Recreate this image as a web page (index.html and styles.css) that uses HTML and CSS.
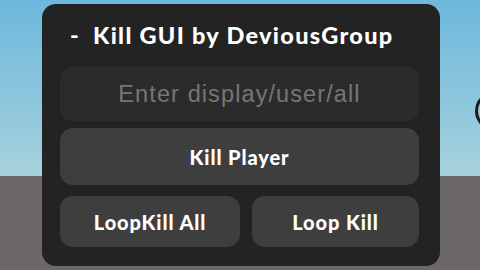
FILE: index.html
```html
<!DOCTYPE html>
<html lang="en">
<head>
    <meta charset="UTF-8">
    <meta name="viewport" content="width=device-width, initial-scale=1.0">
    <title>Kill GUI</title>
    <link rel="stylesheet" href="styles.css">
</head>
<body>
    <div class="scene">
        <div class="sky"></div>
        <div class="ground"></div>
        <div class="avatar-edge"></div>
    </div>

    <div class="gui">
        <div class="gui-title">
            <span class="minimize">-</span>
            <span>Kill GUI by DeviousGroup</span>
        </div>
        <input class="target-input" type="text" placeholder="Enter display/user/all">
        <button class="gui-button kill-button">Kill Player</button>
        <div class="button-row">
            <button class="gui-button">LoopKill All</button>
            <button class="gui-button">Loop Kill</button>
        </div>
    </div>
</body>
</html>
```

FILE: styles.css
```css
/* Base */
body {
    margin: 0;
    padding: 0;
    width: 480px;
    height: 270px;
    overflow: hidden;
    font-family: 'Liberation Sans', Arial, sans-serif;
}

.scene {
    position: absolute;
    inset: 0;
    display: flex;
    flex-direction: column;
    overflow: hidden;
    z-index: -1;
}

.sky {
    height: 176px;
    background: linear-gradient(180deg, #6db8dc 0%, #8cc6dd 55%, #a6d2dc 100%);
}

.ground {
    flex: 1;
    background: #6c6769;
}

.avatar-edge {
    position: absolute;
    left: 475px;
    top: 92px;
    width: 30px;
    height: 32px;
    border: 3px solid #1c1c1c;
    border-radius: 50%;
}

.gui {
    margin: 4px 0 0 42px;
    width: 398px;
    height: 262px;
    box-sizing: border-box;
    padding: 0 21px 0 18px;
    background: #232323;
    border-radius: 14px;
    display: flex;
    flex-direction: column;
}

.gui-title {
    display: flex;
    gap: 13px;
    height: 63px;
    padding: 0 0 0 10px;
    align-items: center;
    color: #fff;
    font-family: Lato, 'Open Sans', sans-serif;
    font-weight: 900;
    font-size: 23.5px;
    letter-spacing: 1.3px;
    line-height: 1;
}

.target-input {
    height: 54px;
    margin: 0;
    border: none;
    border-radius: 12px;
    background: #2b2b2b;
    color: #ddd;
    font-family: 'Liberation Sans', Arial, sans-serif;
    font-size: 23.5px;
    letter-spacing: 1.1px;
    text-align: center;
    outline: none;
    padding: 0;
}

.target-input::placeholder {
    color: #767676;
}

.gui-button {
    border: none;
    border-radius: 13px;
    background: #3e3e3e;
    color: #fff;
    font-family: Lato, 'Open Sans', sans-serif;
    font-weight: 900;
    font-size: 20px;
    letter-spacing: 0.9px;
    cursor: pointer;
    padding: 0;
}

.kill-button {
    height: 57px;
    margin-top: 7px;
}

.button-row {
    display: grid;
    grid-template-columns: 180px 1fr;
    gap: 12px;
    height: 51px;
    margin-top: 11px;
}
```
